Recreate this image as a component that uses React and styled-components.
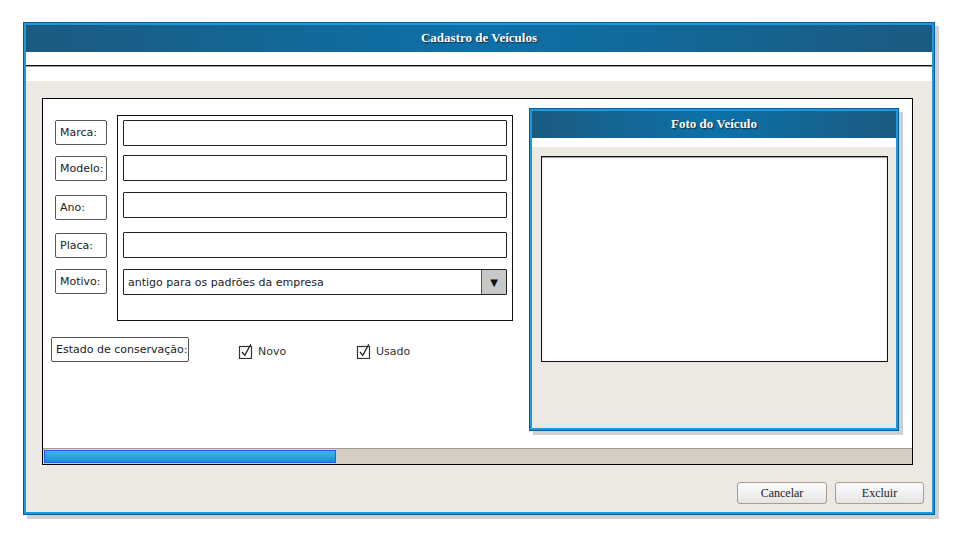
import React from "react";
import styled, { createGlobalStyle } from "styled-components";

const Global = createGlobalStyle`
  html, body { margin: 0; padding: 0; background: #fff; }
  body { font-family: "DejaVu Sans", sans-serif; }
  * { box-sizing: border-box; }
`;

const Page = styled.div`
  padding: 23px 0 0 24px;
  width: 953px;
  height: 536px;
`;

const Window = styled.div`
  width: 910px;
  height: 491px;
  border: 2px solid #1a98e0;
  box-shadow: 0 0 0 1px #0a5c98, 4px 4px 0 1px #cfcfcf;
  display: flex;
  flex-direction: column;
  background: #fff;
`;

const TitleBar = styled.div`
  height: ${(p) => p.$h}px;
  flex: none;
  display: flex;
  align-items: center;
  justify-content: center;
  padding-bottom: 2px;
  background: linear-gradient(90deg, #1b5a80 0%, #0d71a9 50%, #1b5a80 100%);
  color: #fff;
  font-family: "Liberation Serif", serif;
  font-weight: bold;
  font-size: 13px;
  text-shadow: 1px 1px 1px #1a2a3a;
`;

const MenuStrip = styled.div`
  height: 29px;
  flex: none;
  padding-top: 13px;
  background: #fff;
`;

const Rule = styled.div`
  height: 2px;
  border-top: 1px solid #111;
  border-bottom: 1px solid #9a9a9a;
`;

const Body = styled.div`
  flex: 1;
  background: #ece9e3;
  padding: 17px 8px 8px 16px;
  display: flex;
  flex-direction: column;
`;

const Panel = styled.div`
  height: 367px;
  margin-right: 11px;
  background: #fff;
  border: 1px solid #000;
  display: flex;
  flex-direction: column;
`;

const Content = styled.div`
  flex: 1;
  display: flex;
`;

const LeftForm = styled.div`
  padding: 16px 0 0 8px;
  display: flex;
  flex-direction: column;
`;

const FormTop = styled.div`
  display: flex;
  gap: 10px;
`;

const LabelColumn = styled.div`
  margin-left: 4px;
  width: 52px;
  display: flex;
  flex-direction: column;
`;

const Label = styled.div`
  margin-top: ${(p) => p.$mt || 0}px;
  width: ${(p) => p.$w || 52}px;
  height: 25px;
  border: 1.5px solid #555;
  border-radius: 2px;
  display: flex;
  align-items: center;
  padding-left: 4px;
  font-size: 11px;
  color: #222;
  white-space: nowrap;
  background: #fff;
`;

const FieldBox = styled.div`
  width: 396px;
  height: 206px;
  border: 1px solid #111;
  padding: 4px 5px 0;
  display: flex;
  flex-direction: column;
`;

const Input = styled.div`
  margin-top: ${(p) => p.$mt || 0}px;
  height: 26px;
  border: 1px solid #222;
  border-radius: 1px;
  background: #fff;
  display: flex;
  align-items: center;
  font-size: 11px;
  color: #222;
`;

const SelectText = styled.span`
  flex: 1;
  padding-left: 4px;
  padding-top: 1px;
`;

const DropButton = styled.div`
  width: 25px;
  height: 100%;
  background: #c8c8c8;
  border-left: 1px solid #555;
  display: flex;
  align-items: center;
  justify-content: center;
  font-size: 10px;
  color: #111;
`;

const EstadoRow = styled.div`
  margin-top: 16px;
  display: flex;
  align-items: center;
`;

const Check = styled.div`
  width: 118px;
  margin-left: ${(p) => p.$ml || 0}px;
  display: flex;
  align-items: center;
  gap: 4px;
  font-size: 11px;
  color: #333;
  padding-top: 3px;
`;

const PhotoPanel = styled.div`
  margin: 10px 0 0 17px;
  width: 368px;
  height: 321px;
  border: 2px solid #1a98e0;
  box-shadow: 0 0 0 1px #0a5c98, 4px 4px 0 1px #cfcfcf;
  display: flex;
  flex-direction: column;
  background: #ece9e3;
`;

const WhiteGap = styled.div`
  height: 9px;
  background: #fff;
  flex: none;
`;

const PhotoArea = styled.div`
  padding: 9px 8px 0 9px;
`;

const PhotoBox = styled.div`
  height: 206px;
  background: #fff;
  border: 1px solid #111;
  box-shadow: inset 0 1px 1px #999;
`;

const ScrollTrack = styled.div`
  height: 16px;
  flex: none;
  background: #d6cec2;
  border-top: 1px solid #a89c8c;
  padding: 1px;
`;

const Thumb = styled.div`
  width: 292px;
  height: 13px;
  background: linear-gradient(#3ab6f4, #1a8ed6);
  border: 1px solid #2060f0;
`;

const Footer = styled.div`
  margin-top: 17px;
  display: flex;
  justify-content: flex-end;
  gap: 8px;
`;

const Button = styled.button`
  width: ${(p) => p.$w}px;
  height: 22px;
  border: 1px solid #a99c8a;
  border-radius: 3px;
  background: linear-gradient(#fdfdfd, #e4e4e4);
  font-family: "Liberation Serif", serif;
  font-size: 12px;
  color: #222;
  padding: 0;
`;

const CheckIcon = () => (
  <svg width="16" height="16" viewBox="0 0 16 16">
    <rect x="1.5" y="3.5" width="12" height="12" fill="#fff" stroke="#333" strokeWidth="1.2" />
    <path d="M4 9 L6.8 12.4 L12.8 1.2" fill="none" stroke="#222" strokeWidth="1.3" />
  </svg>
);

export default function App() {
  return (
    <Page>
      <Global />
      <Window>
        <TitleBar $h={27}>Cadastro de Veículos</TitleBar>
        <MenuStrip>
          <Rule />
        </MenuStrip>
        <Body>
          <Panel>
            <Content>
              <LeftForm>
                <FormTop>
                  <LabelColumn>
                    <Label $mt={5}>Marca:</Label>
                    <Label $mt={11}>Modelo:</Label>
                    <Label $mt={14}>Ano:</Label>
                    <Label $mt={13}>Placa:</Label>
                    <Label $mt={11}>Motivo:</Label>
                  </LabelColumn>
                  <FieldBox>
                    <Input />
                    <Input $mt={9} />
                    <Input $mt={11} />
                    <Input $mt={14} />
                    <Input $mt={11}>
                      <SelectText>antigo para os padrões da empresa</SelectText>
                      <DropButton>▼</DropButton>
                    </Input>
                  </FieldBox>
                </FormTop>
                <EstadoRow>
                  <Label $w={138}>Estado de conservação:</Label>
                  <Check $ml={49}>
                    <CheckIcon />
                    Novo
                  </Check>
                  <Check>
                    <CheckIcon />
                    Usado
                  </Check>
                </EstadoRow>
              </LeftForm>
              <PhotoPanel>
                <TitleBar $h={27}>Foto do Veículo</TitleBar>
                <WhiteGap />
                <PhotoArea>
                  <PhotoBox />
                </PhotoArea>
              </PhotoPanel>
            </Content>
            <ScrollTrack>
              <Thumb />
            </ScrollTrack>
          </Panel>
          <Footer>
            <Button $w={90}>Cancelar</Button>
            <Button $w={89}>Excluir</Button>
          </Footer>
        </Body>
      </Window>
    </Page>
  );
}
